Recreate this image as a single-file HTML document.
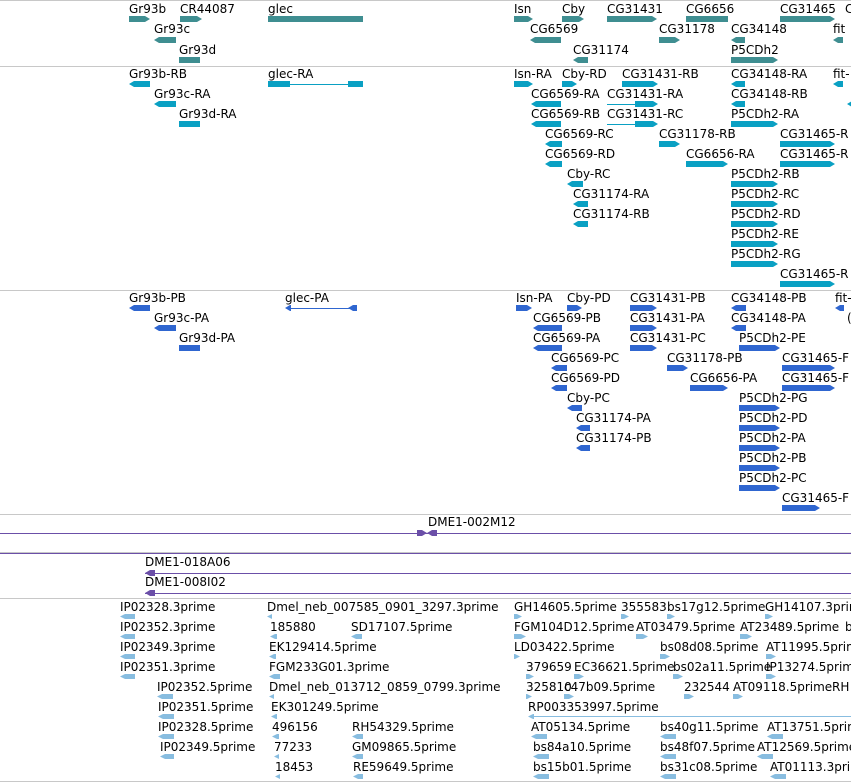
<!DOCTYPE html><html><head><style>
body{margin:0;width:851px;height:782px;background:#fff;position:relative;overflow:hidden;font-family:"DejaVu Sans","Liberation Sans",sans-serif}
.l{position:absolute;font-size:12px;line-height:12px;white-space:nowrap;color:#000}
.b{position:absolute;height:6px}
.g{background:#3f8e91}.t{background:#0aa0c3}.p{background:#2f66d0}.e{background:#88bde0;height:5px}
.r{clip-path:polygon(0 0,calc(100% - 5px) 0,100% 50%,calc(100% - 5px) 100%,0 100%)}
.f{clip-path:polygon(5px 0,100% 0,100% 100%,5px 100%,0 50%)}
.h{position:absolute;height:1px}
.s{position:absolute;left:0;width:851px;height:1px;background:#c8c8c8}
.v{position:absolute;left:0;width:851px;height:1px;background:#6b4fa8}
</style></head><body>
<div class="s" style="top:0"></div><div class="s" style="top:66"></div><div class="s" style="top:290px"></div><div class="s" style="top:514px"></div><div class="s" style="top:552px"></div><div class="s" style="top:598px"></div><div class="s" style="top:781px"></div><div class="s" style="top:66px"></div>

<!-- genes -->
<div class="l" style="left:129px;top:3px">Gr93b</div><div class="b g r" style="left:129px;top:16px;width:21px"></div>
<div class="l" style="left:180px;top:3px">CR44087</div><div class="b g r" style="left:180px;top:16px;width:22px"></div>
<div class="l" style="left:268px;top:3px">glec</div><div class="b g" style="left:268px;top:16px;width:95px"></div>
<div class="l" style="left:514px;top:3px">Isn</div><div class="b g r" style="left:514px;top:16px;width:19px"></div>
<div class="l" style="left:562px;top:3px">Cby</div><div class="b g r" style="left:562px;top:16px;width:22px"></div>
<div class="l" style="left:607px;top:3px">CG31431</div><div class="b g r" style="left:607px;top:16px;width:50px"></div>
<div class="l" style="left:686px;top:3px">CG6656</div><div class="b g" style="left:686px;top:16px;width:42px"></div>
<div class="l" style="left:780px;top:3px">CG31465</div><div class="b g r" style="left:780px;top:16px;width:55px"></div>
<div class="l" style="left:845px;top:3px">C</div>
<div class="l" style="left:154px;top:23px">Gr93c</div><div class="b g f" style="left:154px;top:37px;width:22px"></div>
<div class="l" style="left:530px;top:23px">CG6569</div><div class="b g f" style="left:530px;top:37px;width:31px"></div>
<div class="l" style="left:659px;top:23px">CG31178</div><div class="b g r" style="left:659px;top:37px;width:21px"></div>
<div class="l" style="left:731px;top:23px">CG34148</div><div class="b g f" style="left:731px;top:37px;width:14px"></div>
<div class="l" style="left:833px;top:23px">fit</div><div class="b g f" style="left:833px;top:37px;width:10px"></div>
<div class="l" style="left:179px;top:44px">Gr93d</div><div class="b g" style="left:179px;top:57px;width:21px"></div>
<div class="l" style="left:573px;top:44px">CG31174</div><div class="b g f" style="left:573px;top:57px;width:15px"></div>
<div class="l" style="left:731px;top:44px">P5CDh2</div><div class="b g r" style="left:731px;top:57px;width:47px"></div>

<!-- transcripts -->
<div class="l" style="left:129px;top:68px">Gr93b-RB</div><div class="b t f" style="left:129px;top:81px;width:21px"></div>
<div class="l" style="left:268px;top:68px">glec-RA</div><div class="b t" style="left:268px;top:81px;width:22px"></div><div class="h t" style="left:290px;top:84px;width:58px"></div><div class="b t" style="left:348px;top:81px;width:15px"></div>
<div class="l" style="left:514px;top:68px">Isn-RA</div><div class="b t r" style="left:514px;top:81px;width:19px"></div>
<div class="l" style="left:562px;top:68px">Cby-RD</div><div class="b t r" style="left:562px;top:81px;width:15px"></div>
<div class="l" style="left:622px;top:68px">CG31431-RB</div><div class="b t r" style="left:622px;top:81px;width:36px"></div>
<div class="l" style="left:731px;top:68px">CG34148-RA</div><div class="b t f" style="left:731px;top:81px;width:14px"></div>
<div class="l" style="left:833px;top:68px">fit-</div><div class="b t f" style="left:833px;top:81px;width:10px"></div>
<div class="l" style="left:154px;top:88px">Gr93c-RA</div><div class="b t f" style="left:154px;top:101px;width:22px"></div>
<div class="l" style="left:531px;top:88px">CG6569-RA</div><div class="b t f" style="left:531px;top:101px;width:30px"></div>
<div class="l" style="left:607px;top:88px">CG31431-RA</div><div class="h t" style="left:607px;top:104px;width:30px"></div><div class="b t r" style="left:635px;top:101px;width:23px"></div>
<div class="l" style="left:731px;top:88px">CG34148-RB</div><div class="b t f" style="left:731px;top:101px;width:14px"></div>
<div class="b t f" style="left:847px;top:101px;width:6px"></div>
<div class="l" style="left:179px;top:108px">Gr93d-RA</div><div class="b t" style="left:179px;top:121px;width:21px"></div>
<div class="l" style="left:531px;top:108px">CG6569-RB</div><div class="b t f" style="left:531px;top:121px;width:30px"></div>
<div class="l" style="left:607px;top:108px">CG31431-RC</div><div class="h t" style="left:607px;top:124px;width:30px"></div><div class="b t r" style="left:635px;top:121px;width:23px"></div>
<div class="l" style="left:731px;top:108px">P5CDh2-RA</div><div class="b t r" style="left:731px;top:121px;width:47px"></div>
<div class="l" style="left:545px;top:128px">CG6569-RC</div><div class="b t f" style="left:545px;top:141px;width:17px"></div>
<div class="l" style="left:659px;top:128px">CG31178-RB</div><div class="b t r" style="left:659px;top:141px;width:21px"></div>
<div class="l" style="left:780px;top:128px">CG31465-R</div><div class="b t r" style="left:780px;top:141px;width:55px"></div>
<div class="l" style="left:545px;top:148px">CG6569-RD</div><div class="b t f" style="left:545px;top:161px;width:17px"></div>
<div class="l" style="left:686px;top:148px">CG6656-RA</div><div class="b t r" style="left:686px;top:161px;width:42px"></div>
<div class="l" style="left:780px;top:148px">CG31465-R</div><div class="b t r" style="left:780px;top:161px;width:55px"></div>
<div class="l" style="left:567px;top:168px">Cby-RC</div><div class="b t f" style="left:567px;top:181px;width:16px"></div>
<div class="l" style="left:731px;top:168px">P5CDh2-RB</div><div class="b t r" style="left:731px;top:181px;width:47px"></div>
<div class="l" style="left:573px;top:188px">CG31174-RA</div><div class="b t f" style="left:573px;top:201px;width:15px"></div>
<div class="l" style="left:731px;top:188px">P5CDh2-RC</div><div class="b t r" style="left:731px;top:201px;width:47px"></div>
<div class="l" style="left:573px;top:208px">CG31174-RB</div><div class="b t f" style="left:573px;top:221px;width:15px"></div>
<div class="l" style="left:731px;top:208px">P5CDh2-RD</div><div class="b t r" style="left:731px;top:221px;width:47px"></div>
<div class="l" style="left:731px;top:228px">P5CDh2-RE</div><div class="b t r" style="left:731px;top:241px;width:47px"></div>
<div class="l" style="left:731px;top:248px">P5CDh2-RG</div><div class="b t r" style="left:731px;top:261px;width:47px"></div>
<div class="l" style="left:780px;top:268px">CG31465-R</div><div class="b t r" style="left:780px;top:281px;width:55px"></div>

<!-- proteins -->
<div class="l" style="left:129px;top:292px">Gr93b-PB</div><div class="b p f" style="left:129px;top:305px;width:21px"></div>
<div class="l" style="left:285px;top:292px">glec-PA</div><div class="b p f" style="left:285px;top:305px;width:6px"></div><div class="h p" style="left:290px;top:308px;width:60px"></div><div class="b p f" style="left:348px;top:305px;width:9px"></div>
<div class="l" style="left:516px;top:292px">Isn-PA</div><div class="b p r" style="left:516px;top:305px;width:16px"></div>
<div class="l" style="left:567px;top:292px">Cby-PD</div><div class="b p r" style="left:567px;top:305px;width:15px"></div>
<div class="l" style="left:630px;top:292px">CG31431-PB</div><div class="b p r" style="left:630px;top:305px;width:27px"></div>
<div class="l" style="left:731px;top:292px">CG34148-PB</div><div class="b p f" style="left:731px;top:305px;width:15px"></div>
<div class="l" style="left:835px;top:292px">fit-</div><div class="b p f" style="left:835px;top:305px;width:9px"></div>
<div class="l" style="left:154px;top:312px">Gr93c-PA</div><div class="b p f" style="left:154px;top:325px;width:22px"></div>
<div class="l" style="left:533px;top:312px">CG6569-PB</div><div class="b p f" style="left:533px;top:325px;width:29px"></div>
<div class="l" style="left:630px;top:312px">CG31431-PA</div><div class="b p r" style="left:630px;top:325px;width:27px"></div>
<div class="l" style="left:731px;top:312px">CG34148-PA</div><div class="b p f" style="left:731px;top:325px;width:15px"></div>
<div class="l" style="left:847px;top:312px">(</div>
<div class="l" style="left:179px;top:332px">Gr93d-PA</div><div class="b p" style="left:179px;top:345px;width:21px"></div>
<div class="l" style="left:533px;top:332px">CG6569-PA</div><div class="b p f" style="left:533px;top:345px;width:29px"></div>
<div class="l" style="left:630px;top:332px">CG31431-PC</div><div class="b p r" style="left:630px;top:345px;width:27px"></div>
<div class="l" style="left:739px;top:332px">P5CDh2-PE</div><div class="b p r" style="left:739px;top:345px;width:41px"></div>
<div class="l" style="left:551px;top:352px">CG6569-PC</div><div class="b p f" style="left:551px;top:365px;width:16px"></div>
<div class="l" style="left:667px;top:352px">CG31178-PB</div><div class="b p r" style="left:667px;top:365px;width:21px"></div>
<div class="l" style="left:782px;top:352px">CG31465-F</div><div class="b p r" style="left:782px;top:365px;width:53px"></div>
<div class="l" style="left:551px;top:372px">CG6569-PD</div><div class="b p f" style="left:551px;top:385px;width:16px"></div>
<div class="l" style="left:690px;top:372px">CG6656-PA</div><div class="b p r" style="left:690px;top:385px;width:38px"></div>
<div class="l" style="left:782px;top:372px">CG31465-F</div><div class="b p r" style="left:782px;top:385px;width:53px"></div>
<div class="l" style="left:567px;top:392px">Cby-PC</div><div class="b p f" style="left:567px;top:405px;width:15px"></div>
<div class="l" style="left:739px;top:392px">P5CDh2-PG</div><div class="b p r" style="left:739px;top:405px;width:41px"></div>
<div class="l" style="left:576px;top:412px">CG31174-PA</div><div class="b p f" style="left:576px;top:425px;width:14px"></div>
<div class="l" style="left:739px;top:412px">P5CDh2-PD</div><div class="b p r" style="left:739px;top:425px;width:41px"></div>
<div class="l" style="left:576px;top:432px">CG31174-PB</div><div class="b p f" style="left:576px;top:445px;width:14px"></div>
<div class="l" style="left:739px;top:432px">P5CDh2-PA</div><div class="b p r" style="left:739px;top:445px;width:41px"></div>
<div class="l" style="left:739px;top:452px">P5CDh2-PB</div><div class="b p r" style="left:739px;top:465px;width:41px"></div>
<div class="l" style="left:739px;top:472px">P5CDh2-PC</div><div class="b p r" style="left:739px;top:485px;width:41px"></div>
<div class="l" style="left:782px;top:492px">CG31465-F</div><div class="b p r" style="left:782px;top:505px;width:38px"></div>

<!-- BACs -->
<div class="l" style="left:428px;top:516px">DME1-002M12</div>
<div class="v" style="top:533px"></div>
<div class="b r" style="left:417px;top:530px;width:10px;background:#6b4fa8"></div><div class="b f" style="left:427px;top:530px;width:10px;background:#6b4fa8"></div>
<div class="v" style="top:553px"></div>
<div class="l" style="left:145px;top:556px">DME1-018A06</div>
<div class="h" style="left:145px;top:573px;width:706px;background:#6b4fa8"></div><div class="b f" style="left:145px;top:570px;width:10px;background:#6b4fa8"></div>
<div class="l" style="left:145px;top:576px">DME1-008I02</div>
<div class="h" style="left:145px;top:593px;width:706px;background:#6b4fa8"></div><div class="b f" style="left:145px;top:590px;width:10px;background:#6b4fa8"></div>

<!-- ESTs -->
<div class="l" style="left:120px;top:601px">IP02328.3prime</div><div class="b e f" style="left:120px;top:614px;width:15px"></div>
<div class="l" style="left:120px;top:621px">IP02352.3prime</div><div class="b e f" style="left:120px;top:634px;width:15px"></div>
<div class="l" style="left:120px;top:641px">IP02349.3prime</div><div class="b e f" style="left:120px;top:654px;width:15px"></div>
<div class="l" style="left:120px;top:661px">IP02351.3prime</div><div class="b e f" style="left:120px;top:674px;width:15px"></div>
<div class="l" style="left:157px;top:681px">IP02352.5prime</div><div class="b e f" style="left:157px;top:694px;width:16px"></div>
<div class="l" style="left:158px;top:701px">IP02351.5prime</div><div class="b e f" style="left:158px;top:714px;width:16px"></div>
<div class="l" style="left:158px;top:721px">IP02328.5prime</div><div class="b e f" style="left:158px;top:734px;width:16px"></div>
<div class="l" style="left:160px;top:741px">IP02349.5prime</div><div class="b e f" style="left:160px;top:754px;width:14px"></div>
<div class="l" style="left:267px;top:601px">Dmel_neb_007585_0901_3297.3prime</div><div class="b e f" style="left:267px;top:614px;width:5px"></div>
<div class="l" style="left:270px;top:621px">185880</div><div class="b e f" style="left:270px;top:634px;width:7px"></div>
<div class="l" style="left:351px;top:621px">SD17107.5prime</div><div class="b e f" style="left:351px;top:634px;width:11px"></div>
<div class="l" style="left:269px;top:641px">EK129414.5prime</div><div class="b e f" style="left:269px;top:654px;width:7px"></div>
<div class="l" style="left:269px;top:661px">FGM233G01.3prime</div><div class="b e f" style="left:269px;top:674px;width:11px"></div>
<div class="l" style="left:269px;top:681px">Dmel_neb_013712_0859_0799.3prime</div><div class="b e f" style="left:269px;top:694px;width:5px"></div>
<div class="l" style="left:271px;top:701px">EK301249.5prime</div><div class="b e f" style="left:271px;top:714px;width:6px"></div>
<div class="l" style="left:272px;top:721px">496156</div><div class="b e f" style="left:272px;top:734px;width:7px"></div>
<div class="l" style="left:352px;top:721px">RH54329.5prime</div><div class="b e f" style="left:352px;top:734px;width:11px"></div>
<div class="l" style="left:274px;top:741px">77233</div><div class="b e f" style="left:274px;top:754px;width:5px"></div>
<div class="l" style="left:352px;top:741px">GM09865.5prime</div><div class="b e f" style="left:352px;top:754px;width:11px"></div>
<div class="l" style="left:275px;top:761px">18453</div><div class="b e f" style="left:275px;top:774px;width:5px"></div>
<div class="l" style="left:353px;top:761px">RE59649.5prime</div><div class="b e f" style="left:353px;top:774px;width:10px"></div>

<div class="l" style="left:514px;top:601px">GH14605.5prime</div><div class="b e r" style="left:514px;top:614px;width:8px"></div>
<div class="l" style="left:621px;top:601px">355583</div><div class="b e r" style="left:621px;top:614px;width:8px"></div>
<div class="l" style="left:667px;top:601px">bs17g12.5prime</div><div class="b e r" style="left:667px;top:614px;width:8px"></div>
<div class="l" style="left:765px;top:601px">GH14107.3prime</div><div class="b e r" style="left:765px;top:614px;width:8px"></div>
<div class="l" style="left:514px;top:621px">FGM104D12.5prime</div><div class="b e r" style="left:514px;top:634px;width:12px"></div>
<div class="l" style="left:636px;top:621px">AT03479.5prime</div><div class="b e r" style="left:636px;top:634px;width:12px"></div>
<div class="l" style="left:740px;top:621px">AT23489.5prime</div><div class="b e r" style="left:740px;top:634px;width:12px"></div>
<div class="l" style="left:845px;top:621px">b</div>
<div class="l" style="left:514px;top:641px">LD03422.5prime</div><div class="b e r" style="left:514px;top:654px;width:6px"></div>
<div class="l" style="left:660px;top:641px">bs08d08.5prime</div><div class="b e r" style="left:660px;top:654px;width:10px"></div>
<div class="l" style="left:766px;top:641px">AT11995.5prime</div><div class="b e r" style="left:766px;top:654px;width:10px"></div>
<div class="l" style="left:526px;top:661px">379659</div><div class="b e r" style="left:526px;top:674px;width:8px"></div>
<div class="l" style="left:574px;top:661px">EC36621.5prime</div><div class="b e r" style="left:574px;top:674px;width:10px"></div>
<div class="l" style="left:673px;top:661px">bs02a11.5prime</div><div class="b e r" style="left:673px;top:674px;width:10px"></div>
<div class="l" style="left:766px;top:661px">IP13274.5prime</div><div class="b e r" style="left:766px;top:674px;width:10px"></div>
<div class="l" style="left:526px;top:681px">325810</div><div class="b e r" style="left:526px;top:694px;width:6px"></div>
<div class="l" style="left:564px;top:681px">c47b09.5prime</div><div class="b e r" style="left:564px;top:694px;width:10px"></div>
<div class="l" style="left:684px;top:681px">232544</div><div class="b e r" style="left:684px;top:694px;width:10px"></div>
<div class="l" style="left:733px;top:681px">AT09118.5prime</div><div class="b e r" style="left:733px;top:694px;width:10px"></div>
<div class="l" style="left:832px;top:681px">RH</div>
<div class="l" style="left:528px;top:701px">RP003353997.5prime</div><div class="b e f" style="left:528px;top:714px;width:6px"></div><div class="h" style="left:530px;top:716px;width:321px;background:#88bde0"></div>
<div class="l" style="left:531px;top:721px">AT05134.5prime</div><div class="b e f" style="left:531px;top:734px;width:16px"></div>
<div class="l" style="left:660px;top:721px">bs40g11.5prime</div><div class="b e f" style="left:660px;top:734px;width:16px"></div>
<div class="l" style="left:767px;top:721px">AT13751.5prime</div><div class="b e f" style="left:767px;top:734px;width:16px"></div>
<div class="l" style="left:533px;top:741px">bs84a10.5prime</div><div class="b e f" style="left:533px;top:754px;width:16px"></div>
<div class="l" style="left:660px;top:741px">bs48f07.5prime</div><div class="b e f" style="left:660px;top:754px;width:16px"></div>
<div class="l" style="left:757px;top:741px">AT12569.5prime</div><div class="b e f" style="left:757px;top:754px;width:16px"></div>
<div class="l" style="left:533px;top:761px">bs15b01.5prime</div><div class="b e f" style="left:533px;top:774px;width:16px"></div>
<div class="l" style="left:660px;top:761px">bs31c08.5prime</div><div class="b e f" style="left:660px;top:774px;width:16px"></div>
<div class="l" style="left:770px;top:761px">AT01113.3prime</div><div class="b e f" style="left:770px;top:774px;width:16px"></div>
</body></html>
